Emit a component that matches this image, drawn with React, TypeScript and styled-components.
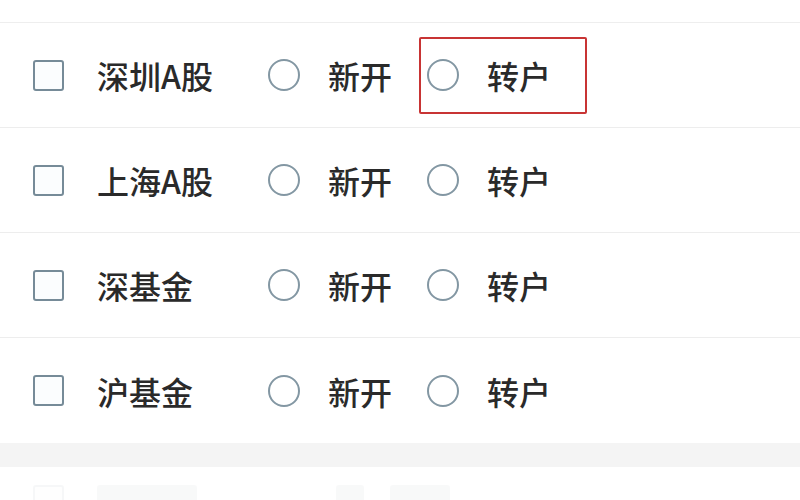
import React from "react";
import styled, { createGlobalStyle } from "styled-components";

const Global = createGlobalStyle`
  html, body { margin: 0; padding: 0; background: #ffffff; }
  body { font-family: "Noto Sans CJK SC", "Noto Sans", sans-serif; overflow: hidden; }
`;

const Page = styled.div`
  width: 800px;
  height: 500px;
  overflow: hidden;
  background: #ffffff;
  display: flex;
  flex-direction: column;
`;

const TopStrip = styled.div`
  height: 23px;
  flex: none;
  box-sizing: border-box;
  border-bottom: 1px solid #eeeeee;
`;

const Row = styled.div<{ $last?: boolean }>`
  flex: none;
  height: 105px;
  box-sizing: border-box;
  display: flex;
  align-items: center;
  padding-left: 33px;
  border-bottom: ${(p) => (p.$last ? "none" : "1px solid #ededed")};
`;

const FadedRow = styled.div`
  flex: none;
  height: 40px;
  display: flex;
  align-items: flex-start;
  padding: 18px 0 0 33px;
  opacity: 0.06;
`;

const Band = styled.div`
  flex: none;
  height: 24px;
  background: #f4f4f4;
`;

const CheckBox = styled.span`
  flex: none;
  width: 31px;
  height: 31px;
  box-sizing: border-box;
  border: 2px solid #768b98;
  border-radius: 3px;
  background: #fbfdfe;
`;

const Label = styled.span`
  width: 130px;
  margin-left: 33px;
  font-size: 32px;
  font-weight: 500;
  line-height: 1;
  color: #2a2a2a;
  white-space: nowrap;
`;

const Ghost = styled.span<{ $w: number; $ml: number }>`
  flex: none;
  width: ${(p) => p.$w}px;
  height: 30px;
  margin-left: ${(p) => p.$ml}px;
  background: #9aa4aa;
  border-radius: 3px;
`;

const Option = styled.div<{ $highlighted?: boolean }>`
  height: 77px;
  box-sizing: border-box;
  display: flex;
  align-items: center;
  gap: 28px;
  padding: 0 ${(p) => (p.$highlighted ? "34px" : "25px")} 0 6px;
  border: 2px solid ${(p) => (p.$highlighted ? "#c83434" : "transparent")};
  border-radius: 2px;
`;

const Options = styled.div`
  display: flex;
  align-items: center;
  margin-left: 33px;
`;

const Radio = styled.span`
  flex: none;
  width: 32px;
  height: 32px;
  box-sizing: border-box;
  border: 2px solid #8397a3;
  border-radius: 50%;
`;

const OptionText = styled.span`
  font-size: 32px;
  font-weight: 500;
  line-height: 1;
  color: #2a2a2a;
  white-space: nowrap;
`;

const rows = [
  { name: "深圳A股", highlight: true },
  { name: "上海A股", highlight: false },
  { name: "深基金", highlight: false },
  { name: "沪基金", highlight: false },
];

function AccountRow({ name, highlight, last }: { name: string; highlight: boolean; last?: boolean }) {
  return (
    <Row $last={last}>
      <CheckBox />
      <Label>{name}</Label>
      <Options>
        <Option>
          <Radio />
          <OptionText>新开</OptionText>
        </Option>
        <Option $highlighted={highlight}>
          <Radio />
          <OptionText>转户</OptionText>
        </Option>
      </Options>
    </Row>
  );
}

export default function App() {
  return (
    <Page>
      <Global />
      <TopStrip />
      {rows.map((r, i) => (
        <AccountRow key={r.name} name={r.name} highlight={r.highlight} last={i === rows.length - 1} />
      ))}
      <Band />
      <FadedRow>
        <CheckBox />
        <Ghost $w={100} $ml={33} />
        <Ghost $w={28} $ml={139} />
        <Ghost $w={60} $ml={26} />
      </FadedRow>
    </Page>
  );
}
